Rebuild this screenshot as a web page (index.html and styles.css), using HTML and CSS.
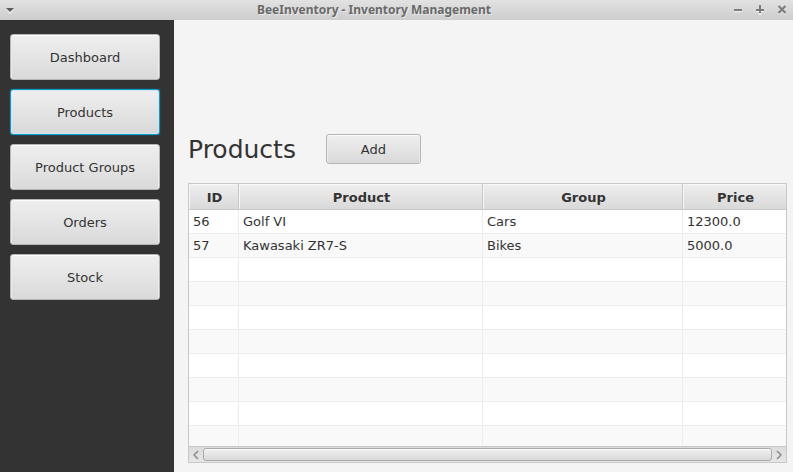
FILE: index.html
```html
<!DOCTYPE html>
<html lang="en">
<head>
<meta charset="utf-8">
<title>BeeInventory - Inventory Management</title>
<link rel="stylesheet" href="styles.css">
</head>
<body>
<header class="titlebar">
  <button class="win-btn" aria-label="Window menu"><svg width="10" height="7" viewBox="0 0 10 7"><path d="M1 2h8L5 7z" fill="#f0f0f0"/><path d="M1 1h8L5 5z" fill="#5c5c5c"/></svg></button>
  <h1 class="window-title">BeeInventory - Inventory Management</h1>
  <div class="win-controls">
    <button class="win-btn" aria-label="Minimize"><svg width="10" height="10" viewBox="0 0 10 10"><path d="M1 6.5h8" stroke="#f0f0f0"/><path d="M1 5h8" stroke="#7c7c7c" stroke-width="2"/></svg></button>
    <button class="win-btn" aria-label="Maximize"><svg width="10" height="10" viewBox="0 0 10 10"><path d="M1 6h8M5 2v8" stroke="#f0f0f0" stroke-width="2"/><path d="M1 5h8M5 0v8" stroke="#7c7c7c" stroke-width="2"/></svg></button>
    <button class="win-btn" aria-label="Close"><svg width="10" height="10" viewBox="0 0 10 10"><path d="M1.500 2l7 7M8.500 2l-7 7" stroke="#f0f0f0" stroke-width="2"/><path d="M1.500 1l7 7M8.500 1l-7 7" stroke="#7c7c7c" stroke-width="2.200"/></svg></button>
  </div>
</header>
<div class="app">
  <nav class="sidebar">
    <button class="btn">Dashboard</button>
    <button class="btn btn-focused">Products</button>
    <button class="btn">Product Groups</button>
    <button class="btn">Orders</button>
    <button class="btn">Stock</button>
  </nav>
  <main class="content">
    <div class="heading-row">
      <h2 class="heading">Products</h2>
      <button class="btn btn-add">Add</button>
    </div>
    <div class="table-view">
      <div class="table-body">
        <table class="table">
          <colgroup><col class="col-id"><col class="col-product"><col class="col-group"><col></colgroup>
          <thead><tr><th>ID</th><th>Product</th><th>Group</th><th>Price</th></tr></thead>
          <tbody>
            <tr><td>56</td><td>Golf VI</td><td>Cars</td><td>12300.0</td></tr>
            <tr><td>57</td><td>Kawasaki ZR7-S</td><td>Bikes</td><td>5000.0</td></tr>
            <tr><td></td><td></td><td></td><td></td></tr>
            <tr><td></td><td></td><td></td><td></td></tr>
            <tr><td></td><td></td><td></td><td></td></tr>
            <tr><td></td><td></td><td></td><td></td></tr>
            <tr><td></td><td></td><td></td><td></td></tr>
            <tr><td></td><td></td><td></td><td></td></tr>
            <tr><td></td><td></td><td></td><td></td></tr>
            <tr><td></td><td></td><td></td><td></td></tr>
          </tbody>
        </table>
      </div>
      <div class="scrollbar">
        <button class="scroll-btn" aria-label="Scroll left"><svg width="6" height="10" viewBox="0 0 6 10"><path d="M5 1L1 5l4 4" fill="none" stroke="#8a8a8a" stroke-width="1.500"/></svg></button>
        <div class="thumb"></div>
        <button class="scroll-btn" aria-label="Scroll right"><svg width="6" height="10" viewBox="0 0 6 10"><path d="M1 1l4 4-4 4" fill="none" stroke="#8a8a8a" stroke-width="1.500"/></svg></button>
      </div>
    </div>
  </main>
</div>
</body>
</html>
```
FILE: styles.css
```css
* {
  box-sizing: border-box;
}

body {
  margin: 0;
  height: 100vh;
  display: flex;
  flex-direction: column;
  overflow: hidden;
  background: #f4f4f4;
  color: #333;
  font: 13px/16px "DejaVu Sans", sans-serif;
}

.titlebar {
  flex: none;
  display: flex;
  align-items: center;
  height: 20px;
  padding: 0 6px 0 5px;
  background: linear-gradient(#e2e2e2, #cdcdcd);
}

.window-title {
  flex: 1;
  margin: 0;
  color: #696969;
  font: bold 12px/18px "Noto Sans", sans-serif;
  text-align: center;
  text-shadow: 1px 1px #e8e8e8;
}

.win-controls {
  display: flex;
  gap: 12px;
}

.win-btn,
.scroll-btn {
  display: flex;
  align-items: center;
  padding: 0;
  border: 0;
  background: none;
}

.app {
  flex: 1;
  display: flex;
  min-height: 0;
}

.sidebar {
  flex: none;
  display: flex;
  flex-direction: column;
  gap: 9px;
  width: 174px;
  padding: 14px 14px 14px 10px;
  background: #333;
}

.btn {
  height: 46px;
  padding: 2px 8px 0;
  border: 1px solid #b5b5b5;
  border-radius: 3px;
  background: linear-gradient(#efefef, #d9d9d9);
  box-shadow: inset 0 1px #fcfcfc, inset 1px 0 #ececec, inset -1px 0 #ececec;
  color: #333;
  font: inherit;
}

.btn-focused {
  border-color: #039ed3;
  box-shadow: 0 0 1px #039ed3, inset 0 0 0 1px #d5e4ea;
}

.content {
  flex: 1;
  display: flex;
  flex-direction: column;
  gap: 17px;
  min-width: 0;
  padding: 114px 6px 9px 14px;
}

.heading-row {
  display: flex;
  align-items: flex-start;
  gap: 30px;
}

.heading {
  margin: 0;
  font-size: 25px;
  font-weight: normal;
  line-height: 32px;
}

.btn-add {
  width: 95px;
  height: 30px;
}

.table-view {
  flex: 1;
  display: flex;
  flex-direction: column;
  min-height: 0;
  border: 1px solid #c8c8c8;
  background: #fff;
}

.table-body {
  flex: 1;
  min-height: 0;
  overflow: hidden;
}

.table {
  width: 100%;
  table-layout: fixed;
  border-spacing: 0;
}

.col-id {
  width: 50px;
}

.col-product {
  width: 244px;
}

.col-group {
  width: 200px;
}

.table th {
  height: 26px;
  padding: 2px 0 0 2px;
  border: solid #c8c8c8;
  border-width: 0 1px 1px 0;
  background: linear-gradient(#efefef, #d9d9d9);
  box-shadow: inset 1px 1px #f7f7f7;
}

.table td {
  height: 24px;
  padding: 0 4px;
  border: solid #ededed;
  border-width: 0 1px 1px 0;
}

.table th:last-child,
.table td:last-child {
  border-right: 0;
}

.table tbody tr:nth-child(even) {
  background: #f9f9f9;
}

.scrollbar {
  flex: none;
  display: flex;
  height: 16px;
  padding: 1px 0;
  border-top: 1px solid #c8c8c8;
  background: linear-gradient(#dcdcdc, #e6e6e6);
}

.scroll-btn {
  justify-content: center;
  width: 14px;
}

.thumb {
  flex: 1;
  border: 1px solid #aaa;
  border-radius: 3px;
  background: linear-gradient(#efefef, #dadada);
  box-shadow: inset 0 1px #fcfcfc;
}
```
